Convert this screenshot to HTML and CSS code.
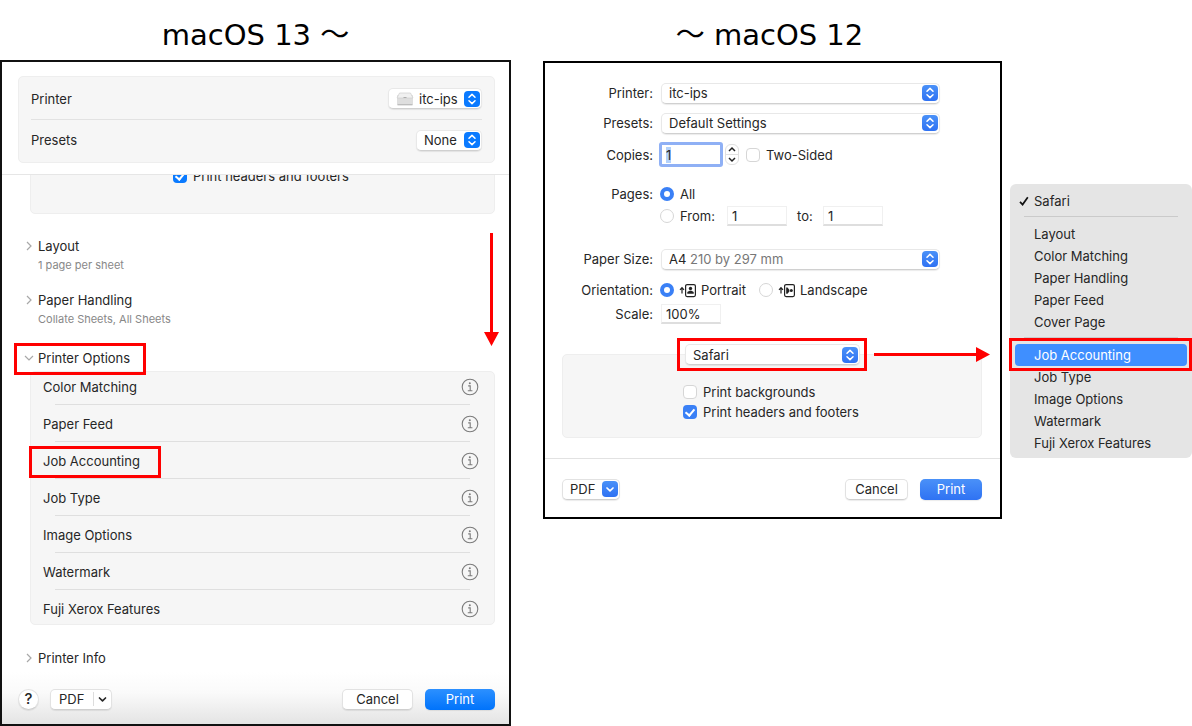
FILE: index.html
```
<!DOCTYPE html>
<html lang="en">
<head>
  <meta charset="UTF-8">
  <title>Print Dialog - Job Accounting</title>
  <link rel="stylesheet" href="styles.css">
</head>
<body>
  <svg class="symbols" aria-hidden="true">
    <symbol id="updown" viewBox="0 0 16 16">
      <path d="M5 6.3 8 3.4l3 2.9M5 9.7l3 2.9 3-2.9" fill="none" stroke="#fff" stroke-width="1.5" stroke-linecap="round" stroke-linejoin="round"/>
    </symbol>
    <symbol id="down" viewBox="0 0 16 16">
      <path d="M5 7l3 2.8L11 7" fill="none" stroke="currentColor" stroke-width="1.7" stroke-linecap="round" stroke-linejoin="round"/>
    </symbol>
    <symbol id="info" viewBox="0 0 18 18">
      <circle cx="9" cy="9" r="7.8" fill="none" stroke="#7b7b7b" stroke-width="1.1"/>
      <circle cx="8.8" cy="5.3" r="1" fill="#7b7b7b"/>
      <path d="M7.2 7.9h2v4.6M6.8 12.7h4.6" fill="none" stroke="#7b7b7b" stroke-width="1.1"/>
    </symbol>
  </svg>

  <main class="compare">
    <section class="column mac13">
      <h1>macOS 13 <span class="wave">～</span></h1>
      <form class="window">
        <div class="top">
          <div class="group">
            <div class="field">
              <label for="printer13">Printer</label>
              <span class="select with-icon">
                <select id="printer13"><option>itc-ips</option></select>
                <svg class="printer-icon" viewBox="0 0 18 14">
                  <rect x="1" y="3" width="16" height="10" rx="1" fill="#dedede"/>
                  <path d="M3.500 1h11L17 6H1z" fill="#f0f0f0" stroke="#cfcfcf" stroke-width=".7"/>
                  <path d="M7.500 5.500h3" stroke="#a5a5a5" stroke-width=".9"/>
                  <path d="M1.500 12.800h15" stroke="#b0b0b0"/>
                </svg>
                <svg class="updown"><use href="#updown"/></svg>
              </span>
            </div>
            <div class="field">
              <label for="presets13">Presets</label>
              <span class="select short">
                <select id="presets13"><option>None</option></select>
                <svg class="updown"><use href="#updown"/></svg>
              </span>
            </div>
          </div>
        </div>

        <div class="scroll">
          <div class="group clipped">
            <label class="check"><input type="checkbox" checked> Print headers and footers</label>
          </div>

          <div class="section">
            <button type="button" class="disclosure"><svg viewBox="0 0 10 10"><path d="M3 1l4 4-4 4"/></svg>Layout</button>
            <p>1 page per sheet</p>
          </div>
          <div class="section">
            <button type="button" class="disclosure"><svg viewBox="0 0 10 10"><path d="M3 1l4 4-4 4"/></svg>Paper Handling</button>
            <p>Collate Sheets, All Sheets</p>
          </div>
          <div class="section open">
            <button type="button" class="disclosure highlight"><svg viewBox="0 0 10 10"><path d="M1 3l4 4 4-4"/></svg>Printer Options</button>
            <div class="group options">
              <ul>
                <li><span>Color Matching</span><button type="button" aria-label="Color Matching info"><svg><use href="#info"/></svg></button></li>
                <li><span>Paper Feed</span><button type="button" aria-label="Paper Feed info"><svg><use href="#info"/></svg></button></li>
                <li><span class="highlight">Job Accounting</span><button type="button" aria-label="Job Accounting info"><svg><use href="#info"/></svg></button></li>
                <li><span>Job Type</span><button type="button" aria-label="Job Type info"><svg><use href="#info"/></svg></button></li>
                <li><span>Image Options</span><button type="button" aria-label="Image Options info"><svg><use href="#info"/></svg></button></li>
                <li><span>Watermark</span><button type="button" aria-label="Watermark info"><svg><use href="#info"/></svg></button></li>
                <li><span>Fuji Xerox Features</span><button type="button" aria-label="Fuji Xerox Features info"><svg><use href="#info"/></svg></button></li>
              </ul>
            </div>
          </div>
          <div class="section">
            <button type="button" class="disclosure"><svg viewBox="0 0 10 10"><path d="M3 1l4 4-4 4"/></svg>Printer Info</button>
          </div>
        </div>

        <div class="buttons">
          <button type="button" class="btn help">?</button>
          <button type="button" class="btn pdf">PDF <span class="pdf-arrow"><svg viewBox="0 1 16 14"><use href="#down" width="16" height="16"/></svg></span></button>
          <button type="button" class="btn cancel">Cancel</button>
          <button type="submit" class="btn primary">Print</button>
        </div>

        <svg class="arrow-down" viewBox="0 0 15 113"><path d="M6 0h3v99h6l-7.500 14L0 99h6z" fill="#f00"/></svg>
      </form>
    </section>

    <section class="column mac12">
      <h1><span class="wave">～</span> macOS 12</h1>
      <form class="window">
        <div class="row">
          <label for="printer12">Printer:</label>
          <span class="select">
            <select id="printer12"><option>itc-ips</option></select>
            <svg class="updown"><use href="#updown"/></svg>
          </span>
        </div>
        <div class="row presets">
          <label for="presets12">Presets:</label>
          <span class="select">
            <select id="presets12"><option>Default Settings</option></select>
            <svg class="updown"><use href="#updown"/></svg>
          </span>
        </div>
        <div class="row copies">
          <label for="copies">Copies:</label>
          <div class="controls">
            <input type="text" id="copies" value="1" autofocus>
            <span class="stepper">
              <button type="button" aria-label="More copies"><svg viewBox="0 0 12 9"><path d="M3 6l3-3 3 3"/></svg></button>
              <button type="button" aria-label="Fewer copies"><svg viewBox="0 0 12 9"><path d="M3 3l3 3 3-3"/></svg></button>
            </span>
            <label class="check"><input type="checkbox"> Two-Sided</label>
          </div>
        </div>
        <div class="row pages">
          <span class="label">Pages:</span>
          <div class="controls">
            <label class="check"><input type="radio" name="pages" checked> All</label>
          </div>
        </div>
        <div class="row">
          <span class="label"></span>
          <div class="controls">
            <label class="check from"><input type="radio" name="pages"> From:</label>
            <input type="text" class="text" value="1" aria-label="From page">
            <label class="to" for="to">to:</label>
            <input type="text" class="text" id="to" value="1">
          </div>
        </div>
        <div class="row paper">
          <label for="paper">Paper Size:</label>
          <span class="select">
            <select id="paper"><option>A4</option></select>
            <span class="dimensions">210 by 297 mm</span>
            <svg class="updown"><use href="#updown"/></svg>
          </span>
        </div>
        <div class="row orientation">
          <span class="label">Orientation:</span>
          <div class="controls">
            <label class="check portrait">
              <input type="radio" name="orientation" checked>
              <svg class="page-icon" viewBox="0 0 17 15">
                <path d="M3 10.500V5M1 6.800 3 4.600l2 2.200" fill="none" stroke="#222" stroke-width="1.2"/>
                <rect x="6.600" y="1.600" width="9.800" height="12" rx="1.500" fill="none" stroke="#222" stroke-width="1.200"/>
                <circle cx="11.500" cy="5.500" r="1.700" fill="#222"/>
                <path d="M8.300 10.800V9l2.200-1.300h2L14.700 9v1.800z" fill="#222"/>
              </svg>
              Portrait
            </label>
            <label class="check">
              <input type="radio" name="orientation">
              <svg class="page-icon" viewBox="0 0 17 15">
                <path d="M3 10.500V5M1 6.800 3 4.600l2 2.200" fill="none" stroke="#222" stroke-width="1.2"/>
                <rect x="6.600" y="1.600" width="9.800" height="12" rx="1.500" fill="none" stroke="#222" stroke-width="1.200"/>
                <circle cx="13.300" cy="7.600" r="1.500" fill="#222"/>
                <path d="M8.200 4.500h1.300l1.800 2.200v1.800l-1.800 2.200H8.200z" fill="#222"/>
              </svg>
              Landscape
            </label>
          </div>
        </div>
        <div class="row scale">
          <label for="scale">Scale:</label>
          <div class="controls"><input type="text" class="text" id="scale" value="100%"></div>
        </div>

        <div class="group app-options">
          <div class="app-inner">
            <span class="select highlight">
              <select aria-label="Options"><option>Safari</option></select>
              <svg class="updown"><use href="#updown"/></svg>
            </span>
            <label class="check"><input type="checkbox"> Print backgrounds</label>
            <label class="check"><input type="checkbox" checked> Print headers and footers</label>
          </div>
        </div>

        <div class="buttons">
          <button type="button" class="btn pdf">PDF <svg class="blue-arrow"><use href="#down"/></svg></button>
          <button type="button" class="btn cancel">Cancel</button>
          <button type="submit" class="btn primary">Print</button>
        </div>

        <svg class="arrow-right" viewBox="0 0 116 15"><path d="M0 6v3h102v6l14-7.500L102 0v6z" fill="#f00"/></svg>
      </form>
    </section>

    <ul class="menu">
      <li><svg class="tick" viewBox="0 0 10 10"><path d="M1 5.800 3.600 8.600 8.800 1.300"/></svg>Safari</li>
      <li class="separator"></li>
      <li>Layout</li>
      <li>Color Matching</li>
      <li>Paper Handling</li>
      <li>Paper Feed</li>
      <li>Cover Page</li>
      <li class="separator"></li>
      <li class="selected highlight">Job Accounting</li>
      <li>Job Type</li>
      <li>Image Options</li>
      <li>Watermark</li>
      <li>Fuji Xerox Features</li>
    </ul>
  </main>

  <script>
    const copies = document.getElementById('copies');
    copies.focus();
    copies.select();
  </script>
</body>
</html>
```
FILE: styles.css
```
*,
*::before,
*::after {
  box-sizing: border-box;
}

body {
  margin: 0;
  background: #fff;
  color: #262626;
  font-family: Inter, "Liberation Sans", sans-serif;
  font-size: 13px;
  line-height: 16px;
}

h1, ul, p {
  margin: 0;
  padding: 0;
}

button, input, select {
  margin: 0;
  color: inherit;
  font: inherit;
}

li {
  list-style: none;
}

.symbols {
  position: absolute;
  width: 0;
  height: 0;
}

.compare {
  display: grid;
  grid-template-columns: 511fr 491fr 190fr;
  align-items: start;
}

h1 {
  height: 60px;
  padding-top: 12px;
  color: #000;
  font-family: "DejaVu Sans", sans-serif;
  font-size: 29px;
  font-weight: normal;
  line-height: 40px;
  text-align: center;
}

.wave {
  font-family: "Noto Sans CJK JP", sans-serif;
}

.window {
  position: relative;
  border: 2px solid #111;
  background: #fff;
}

.group {
  border: 1px solid #eee;
  border-radius: 5px;
  background: #f6f6f6;
}

/* red marks */

.highlight {
  position: relative;
}

.highlight::after {
  content: "";
  position: absolute;
  border: 3px solid #f00;
  pointer-events: none;
}

.arrow-down {
  position: absolute;
  top: 171px;
  right: 10px;
  width: 15px;
  height: 113px;
}

.arrow-right {
  position: absolute;
  top: 284px;
  right: 10px;
  width: 116px;
  height: 15px;
}

/* controls */

.select {
  position: relative;
  display: flex;
  align-items: center;
  height: 21px;
}

.select select {
  width: 100%;
  height: 21px;
  padding: 0 28px 0 7px;
  border: 1px solid #e8e8e8;
  border-bottom-color: #d0d0d0;
  border-radius: 5px;
  background: #fff;
  box-shadow: 0 1px 1px rgba(0, 0, 0, 0.08);
  appearance: none;
}

.updown {
  position: absolute;
  right: 2px;
  width: 16px;
  height: 16px;
  border-radius: 4px;
  background: linear-gradient(#4a91f8, #2f72f3);
  pointer-events: none;
}

.check {
  display: flex;
  align-items: center;
  gap: 6px;
}

.check input {
  position: relative;
  flex: none;
  width: 14px;
  height: 14px;
  border: 1px solid #d6d6d6;
  border-radius: 4px;
  background: #fff;
  appearance: none;
}

.check input[type="radio"] {
  border-radius: 50%;
}

.check input:checked {
  border: 0;
  background: #3a80f6;
}

.check input[type="checkbox"]:checked::after {
  content: "";
  position: absolute;
  top: 2px;
  left: 4px;
  width: 6px;
  height: 9px;
  border: solid #fff;
  border-width: 0 2px 2px 0;
  transform: rotate(40deg);
}

.check input[type="radio"]:checked::after {
  content: "";
  position: absolute;
  inset: 4px;
  border-radius: 50%;
  background: #fff;
}

.text {
  width: 60px;
  height: 20px;
  padding: 0 4px;
  border: 1px solid #f0f0f0;
  border-bottom: 2px solid #dedede;
  background: #fff;
}

.buttons {
  display: flex;
  align-items: center;
}

.btn {
  height: 21px;
  padding: 0;
  border: 1px solid #e2e2e2;
  border-bottom-color: #cfcfcf;
  border-radius: 5px;
  background: #fff;
  box-shadow: 0 1px 1px rgba(0, 0, 0, 0.08);
}

.pdf {
  display: flex;
  align-items: center;
}

.cancel {
  margin-left: auto;
}

.primary {
  margin-left: 12px;
  border: 0;
  color: #fff;
}

/* macOS 13 dialog */

.mac13 .top {
  padding: 14px;
  padding-bottom: 11px;
  padding-left: 16px;
  border-bottom: 1px solid #e6e6e6;
}

.mac13 .top .group {
  padding: 1px 12px 2px;
}

.field {
  display: flex;
  align-items: center;
  justify-content: space-between;
  height: 41px;
}

.field + .field {
  border-top: 1px solid #e2e2e2;
}

.mac13 .updown,
.mac13 .check input:checked {
  background: #0a7aff;
}

.with-icon {
  width: 94px;
}

.short {
  width: 66px;
}

.field .select select {
  padding-right: 18px;
}

.with-icon select {
  padding-left: 30px;
}

.printer-icon {
  position: absolute;
  left: 8px;
  width: 18px;
  height: 14px;
  pointer-events: none;
}

.scroll {
  overflow: hidden;
  padding: 0 14px 0 12px;
}

.clipped {
  height: 47px;
  margin: -8px 0 24px 16px;
  padding-left: 142px;
}

.section {
  height: 54px;
}

.section p {
  padding-left: 24px;
  color: #888;
  font-size: 11px;
  line-height: 22px;
}

.disclosure {
  display: flex;
  align-items: center;
  gap: 4px;
  height: 16px;
  padding: 0 0 0 10px;
  border: 0;
  background: none;
}

.disclosure svg {
  width: 10px;
  height: 10px;
  fill: none;
  stroke: #a8a8a8;
  stroke-width: 1.2;
}

.section.open {
  height: auto;
  padding-top: 4px;
}

.disclosure.highlight::after {
  top: -7px;
  left: 0;
  width: 132px;
  height: 32px;
}

.options {
  height: 254px;
  margin: 5px 0 25px 16px;
}

.options ul {
  margin-top: -4px;
}

.options li {
  position: relative;
  display: flex;
  align-items: center;
  justify-content: space-between;
  height: 37px;
  padding: 0 15px 0 12px;
}

.options li + li::before {
  content: "";
  position: absolute;
  top: -1px;
  left: 24px;
  right: 24px;
  border-top: 1px solid #dfdfdf;
}

.options li button {
  width: 18px;
  height: 18px;
  padding: 0;
  border: 0;
  background: none;
}

.options li svg {
  display: block;
  width: 18px;
  height: 18px;
}

.options .highlight::after {
  top: -7px;
  left: -14px;
  width: 132px;
  height: 32px;
}

.section:last-child {
  height: 22px;
}

.mac13 .buttons {
  height: 52px;
  padding: 2px 14px 0 16px;
  background: linear-gradient(#fff, #fafafa 40%, #e4e4e4);
}

.help {
  width: 21px;
  border-radius: 50%;
  font-size: 15px;
  font-weight: 500;
}

.mac13 .pdf {
  width: 62px;
  margin-left: 11px;
  padding-left: 8px;
}

.pdf-arrow {
  display: flex;
  margin-left: auto;
  border-left: 1px solid #ddd;
}

.pdf-arrow svg {
  width: 17px;
  height: 14px;
}

.mac13 .cancel {
  width: 71px;
}

.mac13 .primary {
  width: 70px;
  background: linear-gradient(#2c90ff, #0073fb);
}

/* macOS 12 dialog */

.mac12 {
  margin-left: 32px;
}

.mac12 h1 {
  height: 61px;
  padding-right: 6px;
}

.mac12 .window {
  padding-top: 19px;
  border-color: #000;
}

.row {
  display: grid;
  grid-template-columns: 108px 1fr;
  column-gap: 8px;
  align-items: center;
  height: 22px;
  padding-right: 60px;
}

.row > label,
.row > .label {
  text-align: right;
}

.controls {
  display: flex;
  align-items: center;
}

.presets {
  margin-top: 8px;
}

.row.copies {
  height: 25px;
  margin-top: 8px;
}

#copies {
  width: 64px;
  height: 25px;
  margin-left: -2px;
  padding: 0 4px;
  border: 3px solid #8fb0f5;
  border-radius: 3px;
  outline: 0;
}

#copies::selection {
  background: #b3d1fb;
  color: #262626;
}

.stepper {
  display: flex;
  flex-direction: column;
  width: 14px;
  margin: 0 7px 0 2px;
  border: 1px solid #e0e0e0;
  border-radius: 6px;
}

.stepper button {
  display: block;
  height: 9px;
  padding: 0;
  border: 0;
  background: none;
}

.stepper button + button {
  height: 10px;
  border-top: 1px solid #e0e0e0;
}

.stepper svg {
  display: block;
  width: 12px;
  height: 9px;
  fill: none;
  stroke: #222;
  stroke-width: 1.5;
}

.pages {
  margin-top: 16px;
}

.row:not(.copies) .check input[type="radio"] {
  margin-left: -1px;
}

.from {
  width: 66px;
}

.to {
  width: 36px;
  padding-left: 10px;
}

.paper {
  margin-top: 21px;
}

.dimensions {
  position: absolute;
  left: 29px;
  color: #777;
  pointer-events: none;
}

.orientation {
  margin-top: 9px;
}

.orientation .check {
  gap: 5px;
}

.portrait {
  width: 99px;
}

.page-icon {
  width: 17px;
  height: 15px;
}

.scale {
  margin-top: 2px;
}

.app-options {
  height: 84px;
  margin: 29px 18px 20px 17px;
}

.app-inner {
  width: 178px;
  margin: -11px auto 0;
}

.app-inner .select {
  margin: 0 1px 17px 2px;
}

.app-inner .highlight::after {
  inset: -6px -7px -6px -8px;
}

.app-inner .check {
  height: 20px;
}

.mac12 .buttons {
  height: 59px;
  padding: 2px 18px 0 17px;
  border-top: 1px solid #e2e2e2;
}

.mac12 .pdf {
  justify-content: space-between;
  width: 58px;
  padding: 0 1px 0 7px;
}

.blue-arrow {
  width: 16px;
  height: 16px;
  border-radius: 4px;
  background: linear-gradient(#4a91f8, #2f72f3);
  color: #fff;
}

.mac12 .cancel {
  width: 63px;
}

.mac12 .primary {
  width: 62px;
  background: linear-gradient(#4a91f8, #2f72f3);
}

/* pop-up menu */

.menu {
  margin: 184px 0 0 8px;
  padding: 6px 5px 4px;
  border-radius: 6px;
  background: #e5e5e5;
}

.menu li {
  position: relative;
  height: 22px;
  padding: 3px 0 3px 19px;
  border-radius: 4px;
}

.menu .separator {
  height: 11px;
  padding: 0;
}

.separator::before {
  content: "";
  position: absolute;
  top: 4px;
  left: 9px;
  right: 9px;
  border-top: 1px solid #cacaca;
}

.menu .selected {
  background: #3f8fff;
  color: #fff;
}

.menu .highlight::after {
  inset: -6px -5px -5px -6px;
}

.tick {
  position: absolute;
  top: 6px;
  left: 4px;
  width: 10px;
  height: 10px;
  fill: none;
  stroke: #111;
  stroke-width: 1.7;
}
```
